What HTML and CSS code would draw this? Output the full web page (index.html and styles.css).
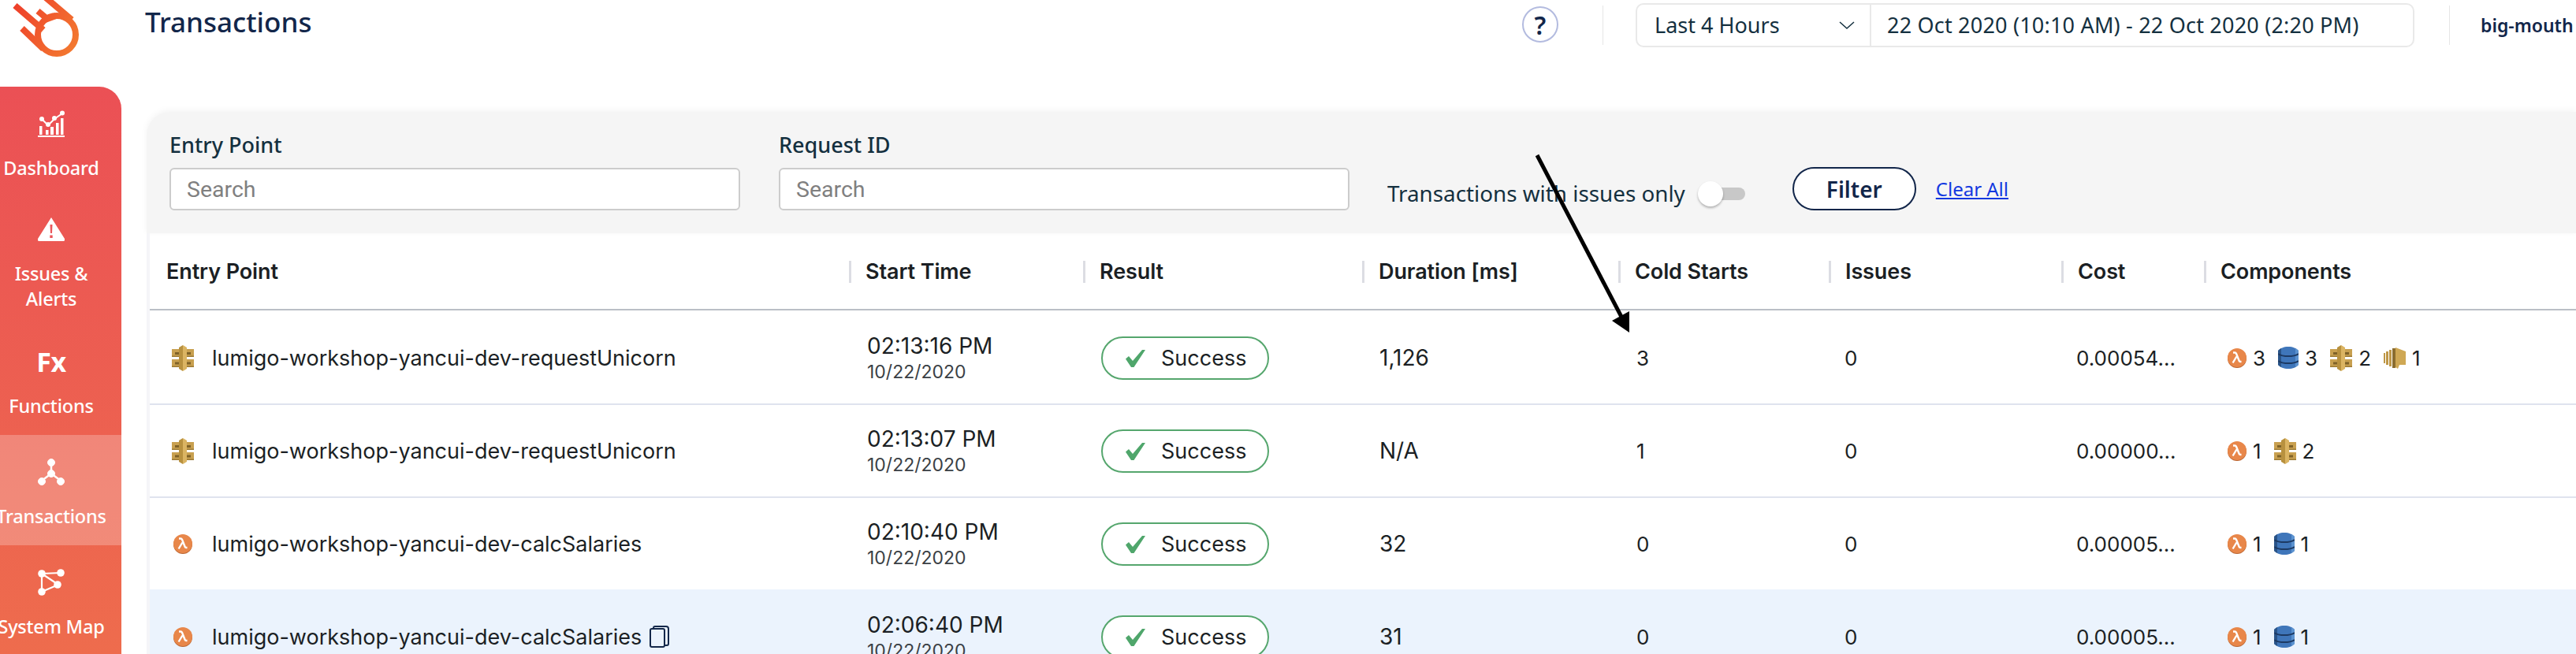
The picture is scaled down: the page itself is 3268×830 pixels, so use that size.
FILE: index.html
```html
<!DOCTYPE html>
<html lang="en">
<head>
<meta charset="utf-8">
<title>Transactions</title>
<link rel="stylesheet" href="styles.css">
</head>
<body>
<svg class="defs" width="0" height="0" aria-hidden="true">
  <defs>
    <linearGradient id="logoGrad" gradientUnits="userSpaceOnUse" x1="16" y1="10" x2="100" y2="60">
      <stop offset="0" stop-color="#EE3F2A"/><stop offset="1" stop-color="#F37B30"/>
    </linearGradient>
    <symbol id="i-lambda" viewBox="0 0 24 25">
      <circle cx="12" cy="13" r="12" fill="#B9632F"/>
      <circle cx="12" cy="12" r="12" fill="#E8874A"/>
      <path d="M7 5.500h2.200c1 0 1.500.5 1.900 1.500l3.600 9c.3.8.7 1 1.600 1h1.200M11.400 10.500 6.600 18.500" fill="none" stroke="#fff" stroke-width="2.400"/>
    </symbol>
    <symbol id="i-api" viewBox="0 0 28 33">
      <path d="M0 5h10v10H0zM0 18h10v10H0zM18 5h10v10H18zM18 18h10v10H18z" fill="#C8A050"/>
      <path d="M4 9h6v3H4zM4 21.500h6v3H4zM18 9h6v3h-6zM18 21.500h6v3h-6z" fill="#7F6228"/>
      <path d="M0 13.500h10V15H0zM0 26.500h10V28H0zM18 13.500h10V15H18zM18 26.500h10V28H18z" fill="#9C7A34"/>
      <path d="M14 0v33l-5-3V3z" fill="#B8913F"/>
      <path d="M14 0l5 3v27l-5 3z" fill="#DBB462"/>
    </symbol>
    <symbol id="i-dynamo" viewBox="0 0 26 28">
      <path d="M0 5c3-3 7-5 13-5s10 2 13 5v18c-3 3-7 5-13 5S3 26 0 23z" fill="#3F76BA"/>
      <path d="M0 5c1-1 2-2 4-3v24c-2-1-3-2-4-3z" fill="#2A5488"/>
      <path d="M22 2c2 1 3 2 4 3v18c-1 1-2 2-4 3z" fill="#5C93D0"/>
      <path d="M0 9c3 2 7 3 13 3s10-1 13-3M0 18c3 2 7 3 13 3s10-1 13-3" fill="none" stroke="#1D3A63" stroke-width="2"/>
    </symbol>
    <symbol id="i-gold" viewBox="0 0 28 27">
      <path d="M0 7h2v13H0zM3 5h3v17H3zM7 3h3v21H7z" fill="#BE9746"/>
      <path d="M11 1h4v25h-4z" fill="#8B6C2E"/>
      <path d="M15 0l13 5v17h-8l-2 5-3-2z" fill="#CFA854"/>
    </symbol>
    <symbol id="i-check" viewBox="0 0 25 22">
      <path d="M0 11.500l4-3.500 5 6L21 0h4L10.500 22H7z" fill="#4FA66B"/>
    </symbol>
  </defs>
</svg>

<div class="app">
  <aside class="side">
    <div class="logo">
      <svg width="104" height="76" viewBox="0 0 104 76" fill="none" stroke="url(#logoGrad)" stroke-width="8">
        <circle cx="72" cy="44" r="24"/>
        <path d="M19 7 55 38M28 36 55 62M58-3 91 25M48 14 60 24 71 20"/>
      </svg>
    </div>
    <nav class="nav">
      <div class="nav-item nav-item-dash">
        <span class="nav-icon">
          <svg width="34" height="34" viewBox="0 0 34 34" fill="#fff">
            <path d="M2 20h3.500v11H2zM10 25h3.500v6H10zM16 21h4v10h-4zM23 16h3.500v15H23zM29 10h3.500v21H29z" />
            <path d="M0 32h34v2H0z"/>
            <path d="M5 11l8 8 8-8 10-7" stroke="#fff" stroke-width="2" fill="none"/>
            <circle cx="5" cy="11" r="3"/><circle cx="13" cy="18" r="3"/><circle cx="21" cy="10" r="3"/><circle cx="31" cy="3.500" r="3"/>
          </svg>
        </span>
        <span class="nav-label">Dashboard</span>
      </div>
      <div class="nav-item nav-item-issues">
        <span class="nav-icon">
          <svg width="34" height="30" viewBox="0 0 34 30">
            <path d="M17 0 34 27a2 2 0 0 1-2 3H2a2 2 0 0 1-2-3z" fill="#fff"/>
            <path d="M15.500 9h3l-.5 11h-2zM15.300 22.500h3.400v3.500h-3.400z" fill="#EA565A"/>
          </svg>
        </span>
        <span class="nav-label">Issues &amp;<br>Alerts</span>
      </div>
      <div class="nav-item">
        <span class="nav-icon nav-fx">Fx</span>
        <span class="nav-label">Functions</span>
      </div>
      <div class="nav-item nav-item-active">
        <span class="nav-icon">
          <svg width="34" height="34" viewBox="0 0 34 34" fill="#fff" stroke="#fff">
            <path d="M17 5v14M5 28l12-9 12 9" stroke-width="2.500" fill="none"/>
            <circle cx="17" cy="5" r="4.500"/><circle cx="17" cy="19" r="4.500"/><circle cx="5" cy="29" r="4.500"/><circle cx="29" cy="29" r="4.500"/>
          </svg>
        </span>
        <span class="nav-label">Transactions</span>
      </div>
      <div class="nav-item">
        <span class="nav-icon">
          <svg width="34" height="34" viewBox="0 0 34 34" fill="#fff">
            <path d="M5 6 29 5M5 6 26 20M5 6V29M5 29 26 20" stroke="#fff" stroke-width="2.200" fill="none"/>
            <circle cx="5" cy="6" r="4.800"/><circle cx="29" cy="5" r="4.800"/><circle cx="25" cy="20" r="4.800"/><circle cx="5" cy="29" r="4.800"/>
          </svg>
        </span>
        <span class="nav-label">System Map</span>
      </div>
    </nav>
  </aside>

  <main class="main">
    <header class="topbar">
      <h1 class="title">Transactions</h1>
      <div class="top-right">
        <span class="help">?</span>
        <span class="vsep vsep-a"></span>
        <div class="datebox">
          <div class="range">
            <span>Last 4 Hours</span>
            <svg class="chev" width="20" height="10" viewBox="0 0 20 10" fill="none" stroke="#14303F" stroke-width="1.500"><path d="M1 1l9 8 9-8"/></svg>
          </div>
          <div class="dates">22 Oct 2020 (10:10 AM) - 22 Oct 2020 (2:20 PM)</div>
        </div>
        <span class="vsep vsep-b"></span>
        <span class="account">big-mouth</span>
      </div>
    </header>

    <section class="filters">
      <div class="field">
        <label class="field-label">Entry Point</label>
        <input class="search" type="text" placeholder="Search">
      </div>
      <div class="field">
        <label class="field-label">Request ID</label>
        <input class="search" type="text" placeholder="Search">
      </div>
      <span class="only-text">Transactions with issues only</span>
      <span class="toggle"><span class="thumb"></span></span>
      <button class="filter-btn" type="button">Filter</button>
      <a class="clear" href="#">Clear All</a>
    </section>

    <section class="table">
      <div class="grid head">
        <div class="hc hc-first">Entry Point</div>
        <div class="hc">Start Time</div>
        <div class="hc">Result</div>
        <div class="hc">Duration [ms]</div>
        <div class="hc">Cold Starts</div>
        <div class="hc">Issues</div>
        <div class="hc">Cost</div>
        <div class="hc">Components</div>
      </div>
      <div class="rows">
        <div class="grid row">
          <div class="c c-entry"><span class="entry-icon"><svg class="ic-api"><use href="#i-api"/></svg></span>lumigo-workshop-yancui-dev-requestUnicorn</div>
          <div class="c c-time"><span class="time">02:13:16 PM</span><span class="date">10/22/2020</span></div>
          <div class="c c-res"><span class="pill"><svg class="ic-check"><use href="#i-check"/></svg>Success</span></div>
          <div class="c c-dur">1,126</div>
          <div class="c c-cold">3</div>
          <div class="c c-iss">0</div>
          <div class="c c-cost">0.00054...</div>
          <div class="c c-comp"><svg class="ic-lambda"><use href="#i-lambda"/></svg><span class="n">3</span><svg class="ic-dynamo"><use href="#i-dynamo"/></svg><span class="n">3</span><svg class="ic-api"><use href="#i-api"/></svg><span class="n">2</span><svg class="ic-gold"><use href="#i-gold"/></svg><span class="n">1</span></div>
        </div>
        <div class="grid row">
          <div class="c c-entry"><span class="entry-icon"><svg class="ic-api"><use href="#i-api"/></svg></span>lumigo-workshop-yancui-dev-requestUnicorn</div>
          <div class="c c-time"><span class="time">02:13:07 PM</span><span class="date">10/22/2020</span></div>
          <div class="c c-res"><span class="pill"><svg class="ic-check"><use href="#i-check"/></svg>Success</span></div>
          <div class="c c-dur">N/A</div>
          <div class="c c-cold">1</div>
          <div class="c c-iss">0</div>
          <div class="c c-cost">0.00000...</div>
          <div class="c c-comp"><svg class="ic-lambda"><use href="#i-lambda"/></svg><span class="n">1</span><svg class="ic-api"><use href="#i-api"/></svg><span class="n">2</span></div>
        </div>
        <div class="grid row">
          <div class="c c-entry"><span class="entry-icon"><svg class="ic-lambda"><use href="#i-lambda"/></svg></span>lumigo-workshop-yancui-dev-calcSalaries</div>
          <div class="c c-time"><span class="time">02:10:40 PM</span><span class="date">10/22/2020</span></div>
          <div class="c c-res"><span class="pill"><svg class="ic-check"><use href="#i-check"/></svg>Success</span></div>
          <div class="c c-dur">32</div>
          <div class="c c-cold">0</div>
          <div class="c c-iss">0</div>
          <div class="c c-cost">0.00005...</div>
          <div class="c c-comp"><svg class="ic-lambda"><use href="#i-lambda"/></svg><span class="n">1</span><svg class="ic-dynamo"><use href="#i-dynamo"/></svg><span class="n">1</span></div>
        </div>
        <div class="grid row row-hi">
          <div class="c c-entry"><span class="entry-icon"><svg class="ic-lambda"><use href="#i-lambda"/></svg></span>lumigo-workshop-yancui-dev-calcSalaries
            <svg class="ic-copy" viewBox="0 0 25 28" fill="none" stroke="#14284A" stroke-width="2"><rect x="1" y="4" width="18" height="23" rx="2"/><path d="M5 4V3a2 2 0 0 1 2-2h14a3 3 0 0 1 3 3v19a2 2 0 0 1-2 2h-3"/></svg>
          </div>
          <div class="c c-time"><span class="time">02:06:40 PM</span><span class="date">10/22/2020</span></div>
          <div class="c c-res"><span class="pill"><svg class="ic-check"><use href="#i-check"/></svg>Success</span></div>
          <div class="c c-dur">31</div>
          <div class="c c-cold">0</div>
          <div class="c c-iss">0</div>
          <div class="c c-cost">0.00005...</div>
          <div class="c c-comp"><svg class="ic-lambda"><use href="#i-lambda"/></svg><span class="n">1</span><svg class="ic-dynamo"><use href="#i-dynamo"/></svg><span class="n">1</span></div>
        </div>
      </div>
    </section>
  </main>
</div>

<svg class="arrow" width="3268" height="830" viewBox="0 0 3268 830">
  <path d="M1950 197 2058 404" stroke="#000" stroke-width="5" fill="none"/>
  <path d="M2045 407 2067 395V422z" fill="#000"/>
</svg>
</body>
</html>
```

FILE: styles.css
```css
* { box-sizing: border-box; }
html, body { margin: 0; padding: 0; height: 830px; overflow: hidden; background: #fff; }
body { font-family: "Inter", "Liberation Sans", sans-serif; color: #1b1f24; position: relative; }
.defs { position: absolute; }

.app { display: flex; width: 3268px; height: 830px; }

/* sidebar */
.side { width: 154px; flex: none; display: flex; flex-direction: column; }
.logo { height: 110px; flex: none; overflow: hidden; }
.logo svg { display: block; }
.nav {
  flex: 1;
  padding-top: 22px;
  border-top-right-radius: 28px;
  background: linear-gradient(180deg, #EB5055 0%, #EE6C4D 100%);
  color: #fff;
  font-family: "Noto Sans", sans-serif;
}
.nav-item {
  height: 140px;
  padding: 30px 24px 0 0;
  display: flex;
  flex-direction: column;
  align-items: center;
  white-space: nowrap;
}
.nav-item-dash { padding-top: 8px; }
.nav-item-issues { padding-top: 2px; }
.nav-item-active { background: rgba(255, 255, 255, 0.24); }
.nav-icon {
  height: 34px;
  flex: none;
  display: flex;
  align-items: center;
  justify-content: center;
  margin-bottom: 23px;
}
.nav-fx { font-size: 34px; font-weight: 700; letter-spacing: -0.5px; }
.nav-label { font-size: 23.500px; font-weight: 500; line-height: 32px; text-align: center; letter-spacing: -0.2px; }

/* main column */
.main { flex: 1; min-width: 0; display: flex; flex-direction: column; }
.topbar { height: 142px; flex: none; display: flex; align-items: flex-start; padding-left: 30px; }
.title {
  margin: 4px 0 0;
  font-family: "Noto Sans", sans-serif;
  font-weight: 500;
  font-size: 35px;
  line-height: 48px;
  color: #12264A;
}
.top-right { margin-left: auto; display: flex; align-items: flex-start; padding-top: 4px; color: #14303F; font-family: "Noto Sans", sans-serif; }
.help {
  width: 46px; height: 46px; margin-top: 4px;
  border: 2px solid #B3BBDF; border-radius: 50%;
  display: flex; align-items: center; justify-content: center;
  font-size: 32px; font-weight: 600; color: #12264A;
}
.vsep { width: 1px; height: 50px; margin-top: 3px; background: #e6e6e6; flex: none; }
.vsep-a { margin-left: 56px; margin-right: 41px; }
.vsep-b { margin-left: 44px; margin-right: 39px; }
.datebox {
  width: 988px; height: 56px;
  display: flex;
  border: 2px solid #e9e9e9; border-radius: 10px;
  font-size: 27px; line-height: 52px;
}
.range {
  width: 297px; flex: none;
  padding: 0 19px 0 22px;
  display: flex; align-items: center; justify-content: space-between;
  border-right: 2px solid #e9e9e9;
}
.chev { flex: none; }
.dates { padding-left: 20px; white-space: nowrap; letter-spacing: 0.2px; }
.account { width: 121px; flex: none; font-size: 23px; font-weight: 600; line-height: 56px; color: #12264A; white-space: nowrap; }

/* filters */
.filters {
  height: 154px; flex: none;
  margin-left: 32px;
  padding: 0 0 29px 29px;
  display: flex; align-items: flex-end;
  background: #F5F5F5;
  border-top-left-radius: 30px;
  box-shadow: 0 -2px 8px rgba(0, 0, 0, 0.05);
  font-family: "Noto Sans", sans-serif;
}
.field { width: 724px; margin-right: 49px; flex: none; display: flex; flex-direction: column; }
.field + .field { margin-right: 48px; }
.field-label { font-size: 27px; font-weight: 500; line-height: 30px; margin-bottom: 14px; color: #14303F; }
.search {
  width: 100%; height: 54px;
  padding: 0 20px;
  border: 2px solid #ccc; border-radius: 6px;
  background: #fff;
  font: 28.500px "Roboto", sans-serif;
  outline: none;
}
.search::placeholder { color: #808080; opacity: 1; }
.only-text { font-size: 27.800px; line-height: 40px; margin-bottom: 2px; color: #14303F; white-space: nowrap; }
.toggle {
  position: relative;
  width: 60px; height: 16px;
  margin: 0 0 13px 16px;
  flex: none;
}
.toggle::before {
  content: ""; position: absolute; left: 14px; right: 0; top: 0; bottom: 0;
  background: #c8c8c8; border-radius: 8px;
}
.thumb {
  position: absolute; left: 0; top: -8px;
  width: 32px; height: 32px; border-radius: 50%;
  background: #fff; box-shadow: 0 2px 3px rgba(0, 0, 0, 0.28);
}
.filter-btn {
  width: 157px; height: 55px;
  margin-left: 60px; flex: none;
  border: 2px solid #12264A; border-radius: 28px;
  background: #fff; color: #12264A;
  font: 600 28px "Noto Sans", sans-serif;
}
.clear { margin: 0 0 12px 25px; font-size: 24px; line-height: 30px; color: #1238E0; white-space: nowrap; }

/* table */
.table { flex: 1; margin-left: 32px; border-left: 4px solid #F5F5F8; min-height: 0; }
.grid { display: grid; grid-template-columns: 887px 297px 354px 325px 267px 295px 181px 1fr; }
.head { height: 98px; align-items: center; border-bottom: 2px solid #BABFC6; padding-top: 2px; }
.hc {
  height: 28px;
  padding-left: 18px;
  border-left: 3px solid #DCDDE3;
  font-size: 27px; font-weight: 600; line-height: 28px;
  letter-spacing: -0.1px;
  color: #1b1f24;
  white-space: nowrap;
}
.hc-first { border-left: 0; padding-left: 21px; }
.rows { padding-top: 2px; }
.row { height: 118px; align-items: center; border-bottom: 2px solid #DFE3EE; font-size: 26px; }
.row-hi { background: #EBF3FD; margin-top: -2px; height: 120px; padding-top: 2px; }
.c { white-space: nowrap; display: flex; align-items: center; }
.c-entry { padding-left: 28px; font-size: 27px; }
.entry-icon { width: 51px; flex: none; display: flex; }
.entry-icon .ic-lambda { margin-left: 2px; }
.ic-lambda { width: 24px; height: 25px; flex: none; }
.ic-api { width: 28px; height: 33px; flex: none; }
.ic-dynamo { width: 26px; height: 28px; flex: none; }
.ic-gold { width: 28px; height: 27px; flex: none; }
.ic-copy { width: 25px; height: 28px; margin-left: 10px; flex: none; }
.ic-check { width: 25px; height: 22px; margin-right: 20px; flex: none; }
.c-time { padding: 2px 0 0 23px; flex-direction: column; align-items: flex-start; }
.time { font-size: 28px; line-height: 32px; }
.date { margin-top: 2px; font-size: 23px; line-height: 31px; color: #3a3f45; }
.c-res { padding-left: 23px; }
.pill {
  width: 213px; height: 55px;
  padding: 1px 0 0 29px;
  display: flex; align-items: center;
  border: 2px solid #55A66D; border-radius: 28px;
  background: #fff;
  font-size: 27px;
}
.c-dur { padding-left: 22px; font-size: 28px; }
.c-cold { padding-left: 23px; }
.c-iss { padding-left: 20px; }
.c-cost { padding-left: 19px; }
.c-comp { padding-left: 30px; }
.n { margin: 0 16px 0 8px; }

/* annotation drawn over the screenshot */
.arrow { position: absolute; left: 0; top: 0; pointer-events: none; }
```
